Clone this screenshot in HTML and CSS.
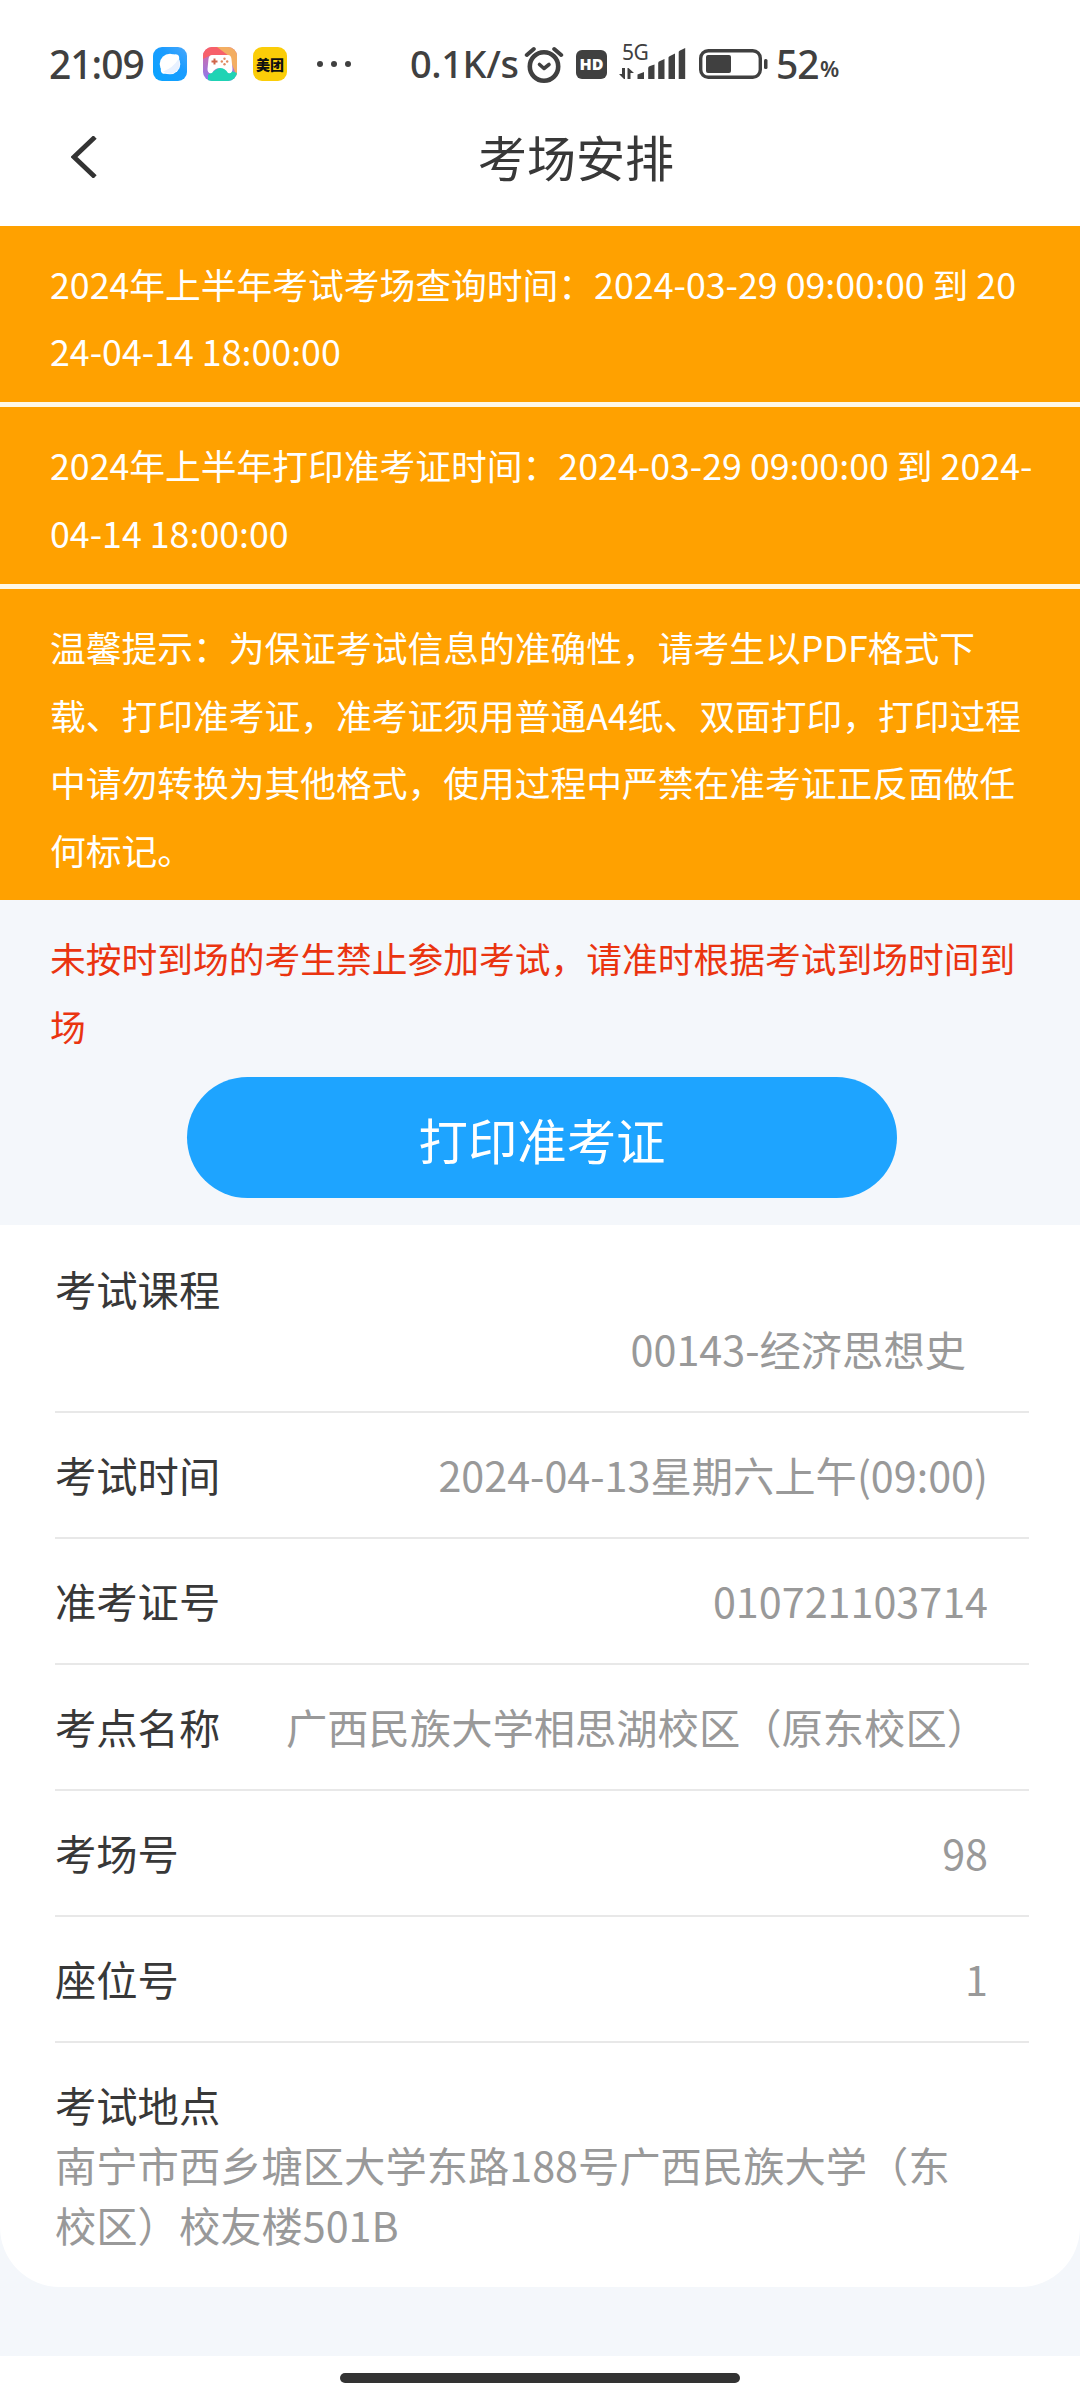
FILE: index.html
```html
<!DOCTYPE html>
<html lang="zh-CN">
<head>
<meta charset="utf-8">
<title>考场安排</title>
<link rel="stylesheet" href="styles.css">
</head>
<body>
<div class="statusbar">
  <span class="clock">21:09</span>
  <svg class="app-icon" viewBox="0 0 34 34">
    <defs><linearGradient id="sky" x1="1" y1="0" x2="0" y2="1"><stop offset="0" stop-color="#4aa8fb"/><stop offset=".4" stop-color="#1b9cff"/><stop offset="1" stop-color="#08a4ff"/></linearGradient></defs>
    <rect width="34" height="34" rx="9" fill="url(#sky)"/>
    <circle cx="17" cy="17" r="10.300" fill="#fff"/>
    <ellipse cx="17" cy="17" rx="12" ry="6" transform="rotate(-48 17 17)" fill="#fff"/>
    <path d="M10 24.500Q20 21 25.500 12Q29 19 23 24.500Q17 29 10 24.500Z" fill="#e8f1ff"/>
  </svg>
  <svg class="app-icon" viewBox="0 0 34 34">
    <defs>
      <clipPath id="tile"><rect width="34" height="34" rx="9"/></clipPath>
      <linearGradient id="violet" x1="0" y1="0" x2="0" y2="1"><stop offset="0" stop-color="#e0689c"/><stop offset="1" stop-color="#8a7cf0"/></linearGradient>
    </defs>
    <g clip-path="url(#tile)">
      <rect width="34" height="34" fill="url(#violet)"/>
      <path d="M12 0H34V30L26 10Z" fill="#f3ae62"/>
      <path d="M0 0H14L26 9H6L0 12Z" fill="#f7606a"/>
      <path d="M5 34V28L17 20L34 26V34Z" fill="#1fd3b4"/>
      <path d="M9 8H25Q28 8 28.500 12L29.500 22Q29.500 27 25 26Q22 21 17 21Q12 21 9 26Q4.500 27 4.500 22L5.500 12Q6 8 9 8Z" fill="#fff"/>
      <path d="M8.500 14.500H14.500M11.500 11.500V17.500" stroke="#d0654a" stroke-width="2"/>
      <g fill="#e08a60"><circle cx="21.500" cy="11.800" r="1.200"/><circle cx="21.500" cy="17.200" r="1.200"/><circle cx="18.800" cy="14.500" r="1.200"/><circle cx="24.200" cy="14.500" r="1.200"/></g>
    </g>
  </svg>
  <span class="app-icon meituan">美团</span>
  <span class="dots"><i></i><i></i><i></i></span>
  <span class="speed">0.1K/s</span>
  <svg class="alarm" viewBox="0 0 40 37" fill="none" stroke="#404040" stroke-linecap="round">
    <circle cx="20" cy="20.500" r="14.200" stroke-width="4.600"/>
    <path d="M2.800 9L9.800 3M37.200 9L30.200 3" stroke-width="4"/>
    <path d="M15.500 18.500L20 22.500L25 18.500" stroke-width="3.600" stroke-linejoin="round"/>
  </svg>
  <span class="hd">HD</span>
  <span class="cell">
    <span class="gen">5G</span>
    <svg class="bars" viewBox="0 0 68 32" fill="#404040">
      <path d="M0 26H3V20H6V31H5ZM8.500 20H9.500L15 25H11.500V31H8.500Z"/>
      <path d="M18.500 26.500L25 24V31H18.500ZM29.200 20Q29.200 18.500 31 18L35.500 16.500V31H29.200ZM39.200 15Q39.200 13.500 41 13L45.500 11V31H39.200ZM49.500 9.500Q49.500 8.500 51 8L56 5.500V31H49.500ZM59.700 4Q59.700 3 61 2.500L66.200 0V31H59.700Z"/>
    </svg>
  </span>
  <svg class="battery" viewBox="0 0 69 30">
    <rect x="1.700" y="1.700" width="59.600" height="26.600" rx="7.500" fill="none" stroke="#404040" stroke-width="3.400"/>
    <rect x="7" y="6" width="25" height="18" rx="2" fill="#404040"/>
    <rect x="65" y="10" width="3.500" height="10" rx="1.500" fill="#404040"/>
  </svg>
  <span class="level">52</span><span class="percent">%</span>
</div>

<header class="navbar">
  <svg class="back" viewBox="0 0 26 42"><path d="M24 1L3 21L24 41" fill="none" stroke="#333" stroke-width="4.800"/></svg>
  <h1 class="title">考场安排</h1>
</header>

<main class="page">
  <section class="notices">
    <p class="notice">2024年上半年考试考场查询时间：2024-03-29 09:00:00 到 20<br>24-04-14 18:00:00</p>
    <p class="notice">2024年上半年打印准考证时间：2024-03-29 09:00:00 到 2024-<br>04-14 18:00:00</p>
    <p class="notice">温馨提示：为保证考试信息的准确性，请考生以PDF格式下<br>载、打印准考证，准考证须用普通A4纸、双面打印，打印过程<br>中请勿转换为其他格式，使用过程中严禁在准考证正反面做任<br>何标记。</p>
  </section>
  <p class="warning">未按时到场的考生禁止参加考试，请准时根据考试到场时间到<br>场</p>
  <button class="print" type="button">打印准考证</button>

  <section class="card">
    <div class="row stacked"><span class="label">考试课程</span><span class="value course">00143-经济思想史</span></div>
    <div class="row"><span class="label">考试时间</span><span class="value">2024-04-13星期六上午(09:00)</span></div>
    <div class="row"><span class="label">准考证号</span><span class="value">010721103714</span></div>
    <div class="row"><span class="label">考点名称</span><span class="value">广西民族大学相思湖校区（原东校区）</span></div>
    <div class="row"><span class="label">考场号</span><span class="value">98</span></div>
    <div class="row"><span class="label">座位号</span><span class="value">1</span></div>
    <div class="row stacked address"><span class="label">考试地点</span><span class="value">南宁市西乡塘区大学东路188号广西民族大学（东<br>校区）校友楼501B</span></div>
  </section>
</main>

<footer class="gesture"><span class="handle"></span></footer>
</body>
</html>
```

FILE: styles.css
```css
* { box-sizing: border-box; }

body {
  margin: 0;
  width: 1080px;
  height: 2400px;
  overflow: hidden;
  display: flex;
  flex-direction: column;
  background: #fff;
  color: #383838;
  font-family: "Noto Sans CJK SC", sans-serif;
  text-spacing-trim: space-all;
}

p, h1 { margin: 0; font-weight: 400; }

/* System status bar */
.statusbar {
  height: 110px;
  padding: 18px 0 0 49px;
  display: flex;
  align-items: center;
  color: #404040;
  font-family: "Noto Sans", sans-serif;
  white-space: nowrap;
}
.statusbar > * { flex: none; }
.clock, .speed, .level { margin-top: -2px; }
.clock { width: 104px; font-size: 39px; font-weight: 500; letter-spacing: -1px; }
.app-icon { width: 34px; height: 34px; margin-right: 16px; }
.meituan {
  border-radius: 9px;
  background: #fbcd08;
  color: #111;
  font: 900 14px/34px "Noto Sans CJK SC", sans-serif;
  text-align: center;
}
.dots { display: flex; gap: 8px; margin-left: 14px; width: 93px; }
.dots i { width: 6px; height: 6px; border-radius: 50%; background: #404040; }
.speed { width: 114px; font-size: 38px; font-weight: 500; letter-spacing: -.4px; }
.alarm { width: 40px; height: 37px; margin-right: 12px; }
.hd {
  width: 31px;
  height: 29px;
  margin-right: 12px;
  border-radius: 6px;
  background: #404040;
  color: #fff;
  font: 800 16px/29px "Open Sans", sans-serif;
  text-align: center;
}
.cell { position: relative; width: 68px; height: 32px; margin-right: 12px; }
.gen { position: absolute; left: 3px; top: -8px; font-size: 21px; line-height: 24px; letter-spacing: -.4px; }
.bars { display: block; width: 68px; height: 32px; }
.battery { width: 69px; height: 30px; margin-right: 8px; }
.level { width: 44px; font-size: 39px; font-weight: 500; letter-spacing: -1px; }
.percent { font-size: 22px; font-weight: 600; padding-top: 7px; }

/* Title bar */
.navbar {
  height: 116px;
  padding: 0 71px;
  display: flex;
  align-items: center;
}
.back { width: 26px; height: 42px; margin-top: -23px; }
.title { flex: 1; margin: -24px 0 0 46px; text-align: center; font-size: 49px; line-height: 72px; }

/* Page body */
.page {
  height: 2130px;
  background: #f4f7fb;
  display: flex;
  flex-direction: column;
}
.notices { display: flex; flex-direction: column; gap: 5px; background: #fff8e8; }
.notice, .warning {
  padding: 23.5px 0 17.5px 50px;
  font-size: 35.75px;
  line-height: 67.5px;
  white-space: nowrap;
}
.notice { background: #ffa100; color: #fff; }
.notice:nth-child(2) { padding: 24px 0 18px 50px; }
.notice:last-child { padding: 24px 0 17px 50px; }
.warning { padding: 24px 0 18px 50px; color: #ea3410; }
.print {
  width: 710px;
  height: 121px;
  margin: 0 0 27px 187px;
  padding: 3px 0 0;
  border: 0;
  border-radius: 61px;
  background: #1ea4ff;
  color: #fff;
  font: 400 49.4px/72px "Noto Sans CJK SC", sans-serif;
}

/* Exam details */
.card {
  padding: 0 51px 33px 55px;
  border-radius: 0 0 60px 60px;
  background: #fff;
  font-size: 41.3px;
  line-height: 60px;
}
.row {
  height: 126px;
  padding: 31px 41px 30px 0;
  border-bottom: 2px solid #e8e8e8;
  display: flex;
  justify-content: space-between;
  white-space: nowrap;
}
.stacked { height: 188px; padding-top: 33px; flex-direction: column; justify-content: flex-start; }
.value { color: #999; }
.course { align-self: flex-end; margin-right: 22px; }
.address { height: auto; padding: 31px 0 0; border: 0; }

/* Gesture area */
.gesture { height: 44px; padding-top: 17px; display: flex; justify-content: center; }
.handle { width: 400px; height: 10px; border-radius: 5px; background: #333; }
```
